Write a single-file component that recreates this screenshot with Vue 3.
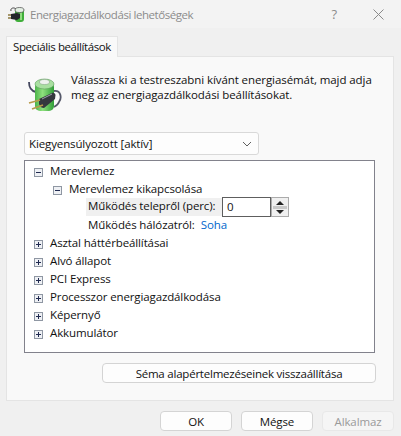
<script setup>
const collapsed = ['Asztal háttérbeállításai', 'Alvó állapot', 'PCI Express', 'Processzor energiagazdálkodása', 'Képernyő', 'Akkumulátor']
</script>

<template>
  <div class="dialog">
    <header class="titlebar">
      <svg class="app-icon" width="17" height="17" viewBox="0 0 17 17">
        <path d="M3 5c-1-3 3-4 5-2" fill="none" stroke="#444" stroke-width="1"/>
        <rect x="7" y="3" width="9" height="13" rx="3" fill="#3fae3a"/>
        <rect x="12" y="6" width="2" height="8" fill="#8fdc7f"/>
        <ellipse cx="11.5" cy="4" rx="4.5" ry="2.5" fill="#e4efe4" stroke="#444" stroke-width=".7"/>
        <path d="M3 8l6-1 3 1v4l-3 2-6-1z" fill="#22252a"/>
        <path d="M0 9h3M0 12h3" stroke="#8d7a3f" stroke-width="1.3"/>
      </svg>
      <span class="title">Energiagazdálkodási lehetőségek</span>
      <span class="help">?</span>
      <svg class="close" width="11" height="11" viewBox="0 0 11 11">
        <path d="M.5.5l10 10M10.5.5l-10 10" stroke="#8a8a8a" fill="none"/>
      </svg>
    </header>

    <div class="tabstrip">
      <div class="tab">Speciális beállítások</div>
    </div>

    <section class="panel">
      <div class="intro">
        <svg class="battery" width="34" height="34" viewBox="0 0 34 34">
          <defs>
            <linearGradient id="body" x1="0" x2="1" y1="0" y2="0">
              <stop offset="0" stop-color="#4cb44a"/>
              <stop offset=".4" stop-color="#8fe07e"/>
              <stop offset="1" stop-color="#2f9e38"/>
            </linearGradient>
          </defs>
          <path d="M1 4c0 5 2 9 7 10" fill="none" stroke="#44475e" stroke-width="1.8"/>
          <path d="M26 13c7-1 8 7 5 11-1 3-3 4-5 5" fill="none" stroke="#55586a" stroke-width="1.8"/>
          <rect x="7" y="4" width="19" height="29" rx="5" fill="url(#body)"/>
          <ellipse cx="16.5" cy="6" rx="9.5" ry="5" fill="#a8dfa0" stroke="#5d9c5d" stroke-width=".6"/>
          <ellipse cx="16.5" cy="4" rx="5" ry="2.5" fill="#eef2ee" stroke="#8aa68a" stroke-width=".6"/>
          <path d="M11 21l13-6c2-.5 3 .5 3.500 2l-.5 4-11 9c-2 0-4-1-5-4z" fill="#34373e"/>
          <path d="M14 21l10-5" stroke="#a0a4ac" stroke-width="1"/>
          <path d="M1 25l11-3M4 31l11-4" stroke="#b89a4a" stroke-width="1.800"/>
        </svg>
        <p>Válassza ki a testreszabni kívánt energiasémát, majd adja<br>meg az energiagazdálkodási beállításokat.</p>
      </div>

      <div class="combo">
        <span>Kiegyensúlyozott [aktív]</span>
        <svg width="10" height="6" viewBox="0 0 10 6"><path d="M1 1l4 4 4-4" fill="none" stroke="#5f5f5f"/></svg>
      </div>

      <div class="tree">
        <div class="row"><span class="box minus"></span><span class="lbl">Merevlemez</span></div>
        <div class="row lvl1"><span class="box minus"></span><span class="lbl">Merevlemez kikapcsolása</span></div>
        <div class="row lvl2">
          <span class="selected">Működés telepről (perc):</span>
          <span class="spin">
            <span class="input">0</span>
            <span class="arrows">
              <svg width="8" height="4" viewBox="0 0 8 4"><path d="M4 0l4 4H0z" fill="#222"/></svg>
              <i></i>
              <svg width="8" height="4" viewBox="0 0 8 4"><path d="M4 4L0 0h8z" fill="#222"/></svg>
            </span>
          </span>
        </div>
        <div class="row lvl2"><span class="lbl plain">Működés hálózatról:</span><a class="lbl link">Soha</a></div>
        <div v-for="name in collapsed" :key="name" class="row"><span class="box plus"></span><span class="lbl">{{ name }}</span></div>
      </div>

      <div class="restore-row">
        <button class="btn restore">Séma alapértelmezéseinek visszaállítása</button>
      </div>
    </section>

    <footer class="footer">
      <button class="btn action">OK</button>
      <button class="btn action">Mégse</button>
      <button class="btn action disabled">Alkalmaz</button>
    </footer>
  </div>
</template>

<style>
html, body { margin: 0; background: #f0f0f0; }
</style>

<style scoped>
.dialog {
  width: 401px;
  height: 436px;
  background: #f0f0f0;
  font-family: "Open Sans", "Noto Sans", sans-serif;
  font-size: 11.5px;
  letter-spacing: -0.12px;
  color: #111;
  overflow: hidden;
}
.titlebar {
  height: 28px;
  display: flex;
  align-items: center;
  background: #f3f3f3;
  padding: 0 17px 0 8px;
}
.app-icon { margin-right: 5px; }
.title { flex: 1; color: #8c8c8c; letter-spacing: -0.44px; }
.help { color: #8c8c8c; font-size: 13px; margin-right: 36px; }
.tabstrip { height: 28px; padding: 8px 0 0 6px; box-sizing: border-box; }
.tab {
  width: 112px;
  height: 21px;
  box-sizing: border-box;
  background: #f9f9f9;
  border: 1px solid #e4e4e4;
  border-bottom: none;
  line-height: 19px;
  text-align: center;
  letter-spacing: -0.4px;
  position: relative;
  z-index: 1;
}
.panel {
  margin: 0 7px 0 6px;
  height: 345px;
  box-sizing: border-box;
  background: #f9f9f9;
  border: 1px solid #e4e4e4;
  padding: 15px 18px 0 17px;
}
.intro { display: flex; height: 60px; box-sizing: border-box; }
.battery { margin: 6px 0 0 4px; flex: none; }
.intro p { margin: 0 0 0 9px; line-height: 15px; letter-spacing: -0.08px; }
.combo {
  width: 235px;
  height: 23px;
  box-sizing: border-box;
  background: #fdfdfd;
  border: 1px solid #d9d9d9;
  border-radius: 3px;
  display: flex;
  align-items: center;
  justify-content: space-between;
  padding: 0 6px 0 4px;
}
.tree {
  margin-top: 5px;
  width: 351px;
  height: 193px;
  box-sizing: border-box;
  border: 1px solid #82828c;
  background: #fff;
  padding: 1px 0 0 9px;
}
.row { height: 18px; display: flex; align-items: center; }
.lbl { padding-bottom: 2px; }
.box {
  width: 9px;
  height: 9px;
  box-sizing: border-box;
  border: 1px solid #8f97a3;
  background: #eef0f4;
  margin: 3px 7px 0 0;
  flex: none;
  position: relative;
}
.box::before {
  content: "";
  position: absolute;
  left: 1px;
  top: 3px;
  width: 5px;
  height: 1px;
  background: #202a50;
}
.plus::after {
  content: "";
  position: absolute;
  left: 3px;
  top: 1px;
  width: 1px;
  height: 5px;
  background: #202a50;
}
.lvl1 { padding-left: 19px; }
.lvl2 { padding-left: 52px; }
.selected {
  background: #f0f0f0;
  width: 136px;
  height: 18px;
  line-height: 16px;
  padding: 0 0 2px 2px;
  box-sizing: border-box;
  white-space: nowrap;
}
.plain { padding-left: 2px; margin-right: 6px; }
.link { color: #0066cc; }
.spin { display: flex; height: 20px; }
.input {
  width: 49px;
  box-sizing: border-box;
  border: 1px solid #5e5e5e;
  background: #fff;
  line-height: 17px;
  padding-left: 4px;
}
.arrows {
  width: 18px;
  box-sizing: border-box;
  border: 1px solid #ababab;
  background: #f0f0f0;
  display: flex;
  flex-direction: column;
  align-items: center;
  justify-content: center;
  gap: 1px;
}
.arrows i { width: 14px; height: 3px; background: #c9c9c9; }
.restore-row { display: flex; justify-content: flex-end; margin: 10px -1px 0 0; }
.btn {
  font: inherit;
  letter-spacing: inherit;
  color: #111;
  background: #fdfdfd;
  border: 1px solid #d4d4d4;
  border-radius: 4px;
  padding: 0;
}
.restore { width: 274px; height: 20px; letter-spacing: -0.22px; }
.footer { display: flex; justify-content: flex-end; gap: 9px; padding: 10px 7px 0 0; }
.action { width: 72px; height: 20px; }
.disabled { background: #f5f5f5; border-color: #e8e8e8; color: #9a9a9a; }
</style>
